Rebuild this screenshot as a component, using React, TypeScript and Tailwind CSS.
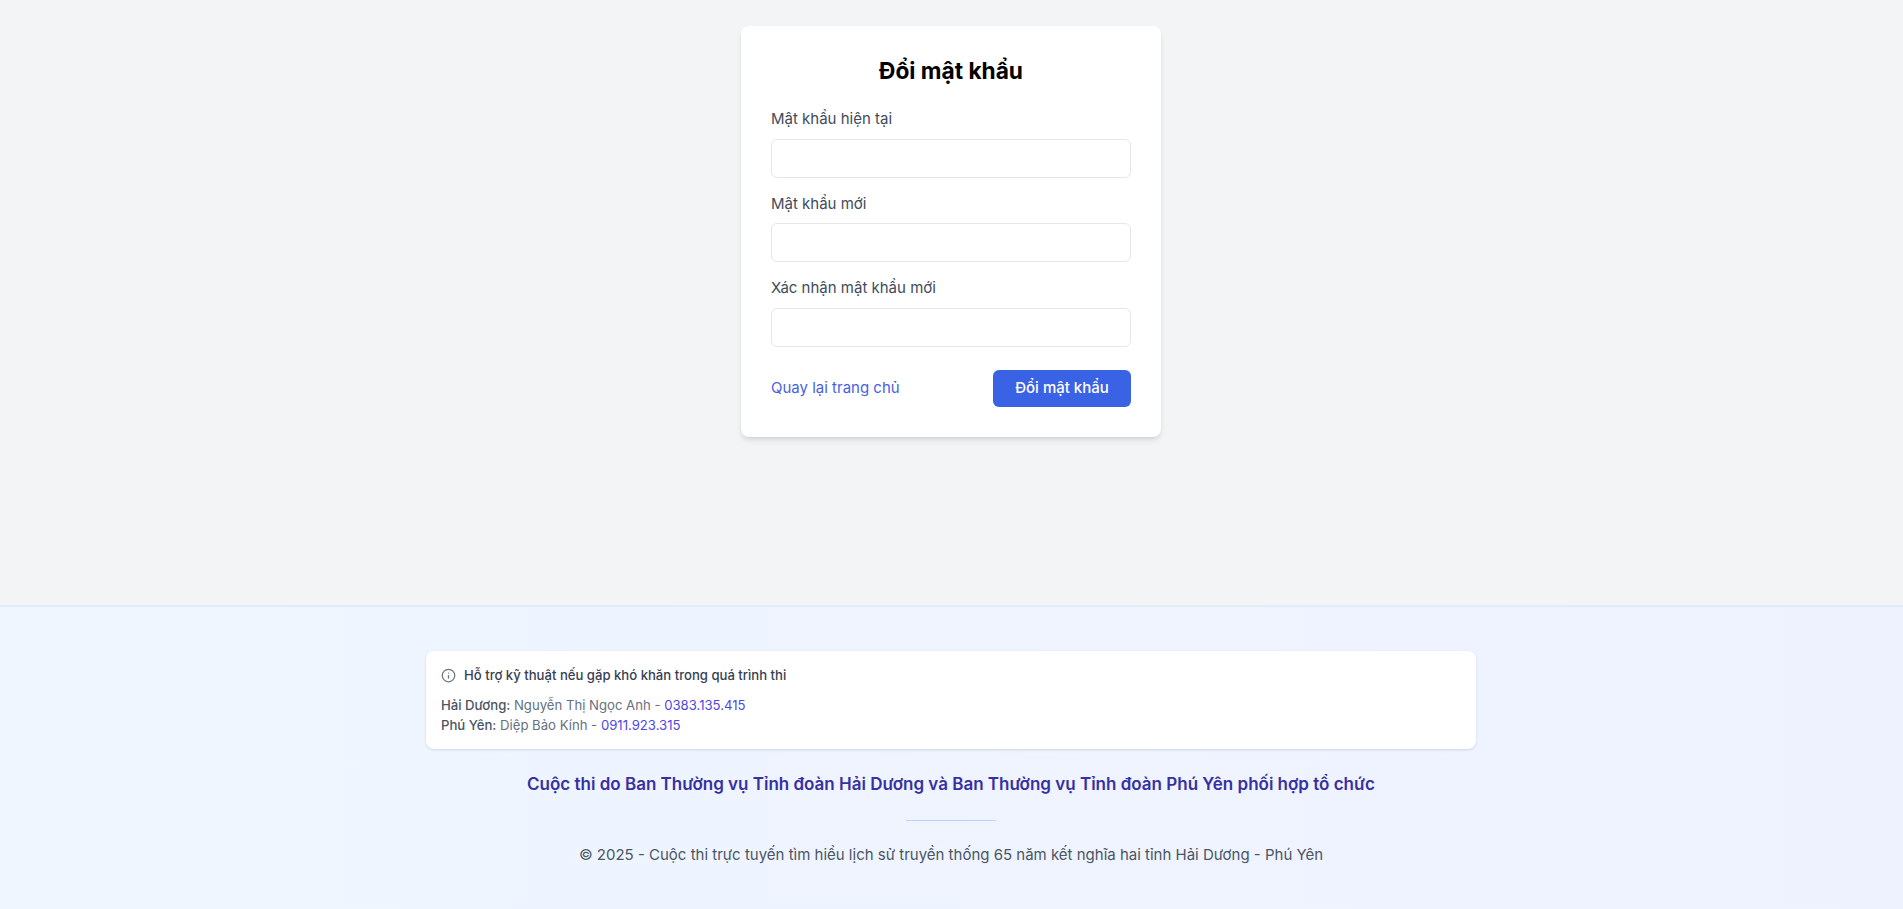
import { Info } from 'lucide-react';

const fields = ['Mật khẩu hiện tại', 'Mật khẩu mới', 'Xác nhận mật khẩu mới'];

export default function App() {
  return (
    <div className="min-h-[909px] flex flex-col bg-[#f3f4f6] font-['Inter',sans-serif]">
      {/* Form */}
      <main className="h-[605px] pt-[26px] pr-px">
        <form className="mx-auto w-[420px] h-[411px] rounded-lg bg-white p-[30px] shadow-md">
          <h1 className="text-center text-[22.7px] leading-[30px] font-bold text-black">Đổi mật khẩu</h1>

          <div className="mt-[22.2px] flex flex-col gap-[14.8px]">
            {fields.map((label) => (
              <div key={label}>
                <label className="block text-[15px] leading-[22.5px] text-[#414b5a] mb-[7.9px]">{label}</label>
                <input type="password" className="block w-full h-[39.3px] rounded-md border border-[#e5e7eb] bg-white px-3" />
              </div>
            ))}
          </div>

          <div className="mt-[23.1px] flex items-center justify-between">
            <a className="text-[15px] text-[#4a5fe0]">Quay lại trang chủ</a>
            <button type="button" className="w-[138px] h-[37px] rounded-md bg-[#3a62e4] text-[15px] font-medium text-white">
              Đổi mật khẩu
            </button>
          </div>
        </form>
      </main>

      {/* Footer */}
      <footer className="h-[304px] border-t-2 border-[#e3ebf9] bg-gradient-to-r from-[#eff6ff] to-[#eef2ff] pt-[44px] pr-px">
        <div className="mx-auto w-[1050px]">
          <div className="h-[98px] rounded-lg bg-white px-[15px] py-[14px] shadow-sm">
            <div className="flex items-center gap-[8px] text-[13.12px] leading-[20px] font-medium text-[#374151]">
              <Info className="w-[15px] h-[15px] text-[#6b7280]" strokeWidth={2} />
              <span>Hỗ trợ kỹ thuật nếu gặp khó khăn trong quá trình thi</span>
            </div>
            <div className="mt-[11px] text-[13.15px] leading-[19.7px] text-[#667080]">
              <p>
                <span className="font-medium text-[#4b5563]">Hải Dương:</span> Nguyễn Thị Ngọc Anh -{' '}
                <span className="text-[#4f46e5]">0383.135.415</span>
              </p>
              <p>
                <span className="font-medium text-[#4b5563]">Phú Yên:</span> Diệp Bảo Kính -{' '}
                <span className="text-[#4f46e5]">0911.923.315</span>
              </p>
            </div>
          </div>

          <p className="mt-[23px] text-center text-[17px] leading-[24px] font-semibold text-[#3730a3]">
            Cuộc thi do Ban Thường vụ Tỉnh đoàn Hải Dương và Ban Thường vụ Tỉnh đoàn Phú Yên phối hợp tổ chức
          </p>
          <div className="mx-auto mt-[24px] h-px w-[90px] bg-[#bfcffb]" />
          <p className="mt-[22px] text-center text-[15px] leading-[24px] text-[#4b5563]">
            © 2025 - Cuộc thi trực tuyến tìm hiểu lịch sử truyền thống 65 năm kết nghĩa hai tỉnh Hải Dương - Phú Yên
          </p>
        </div>
      </footer>
    </div>
  );
}
